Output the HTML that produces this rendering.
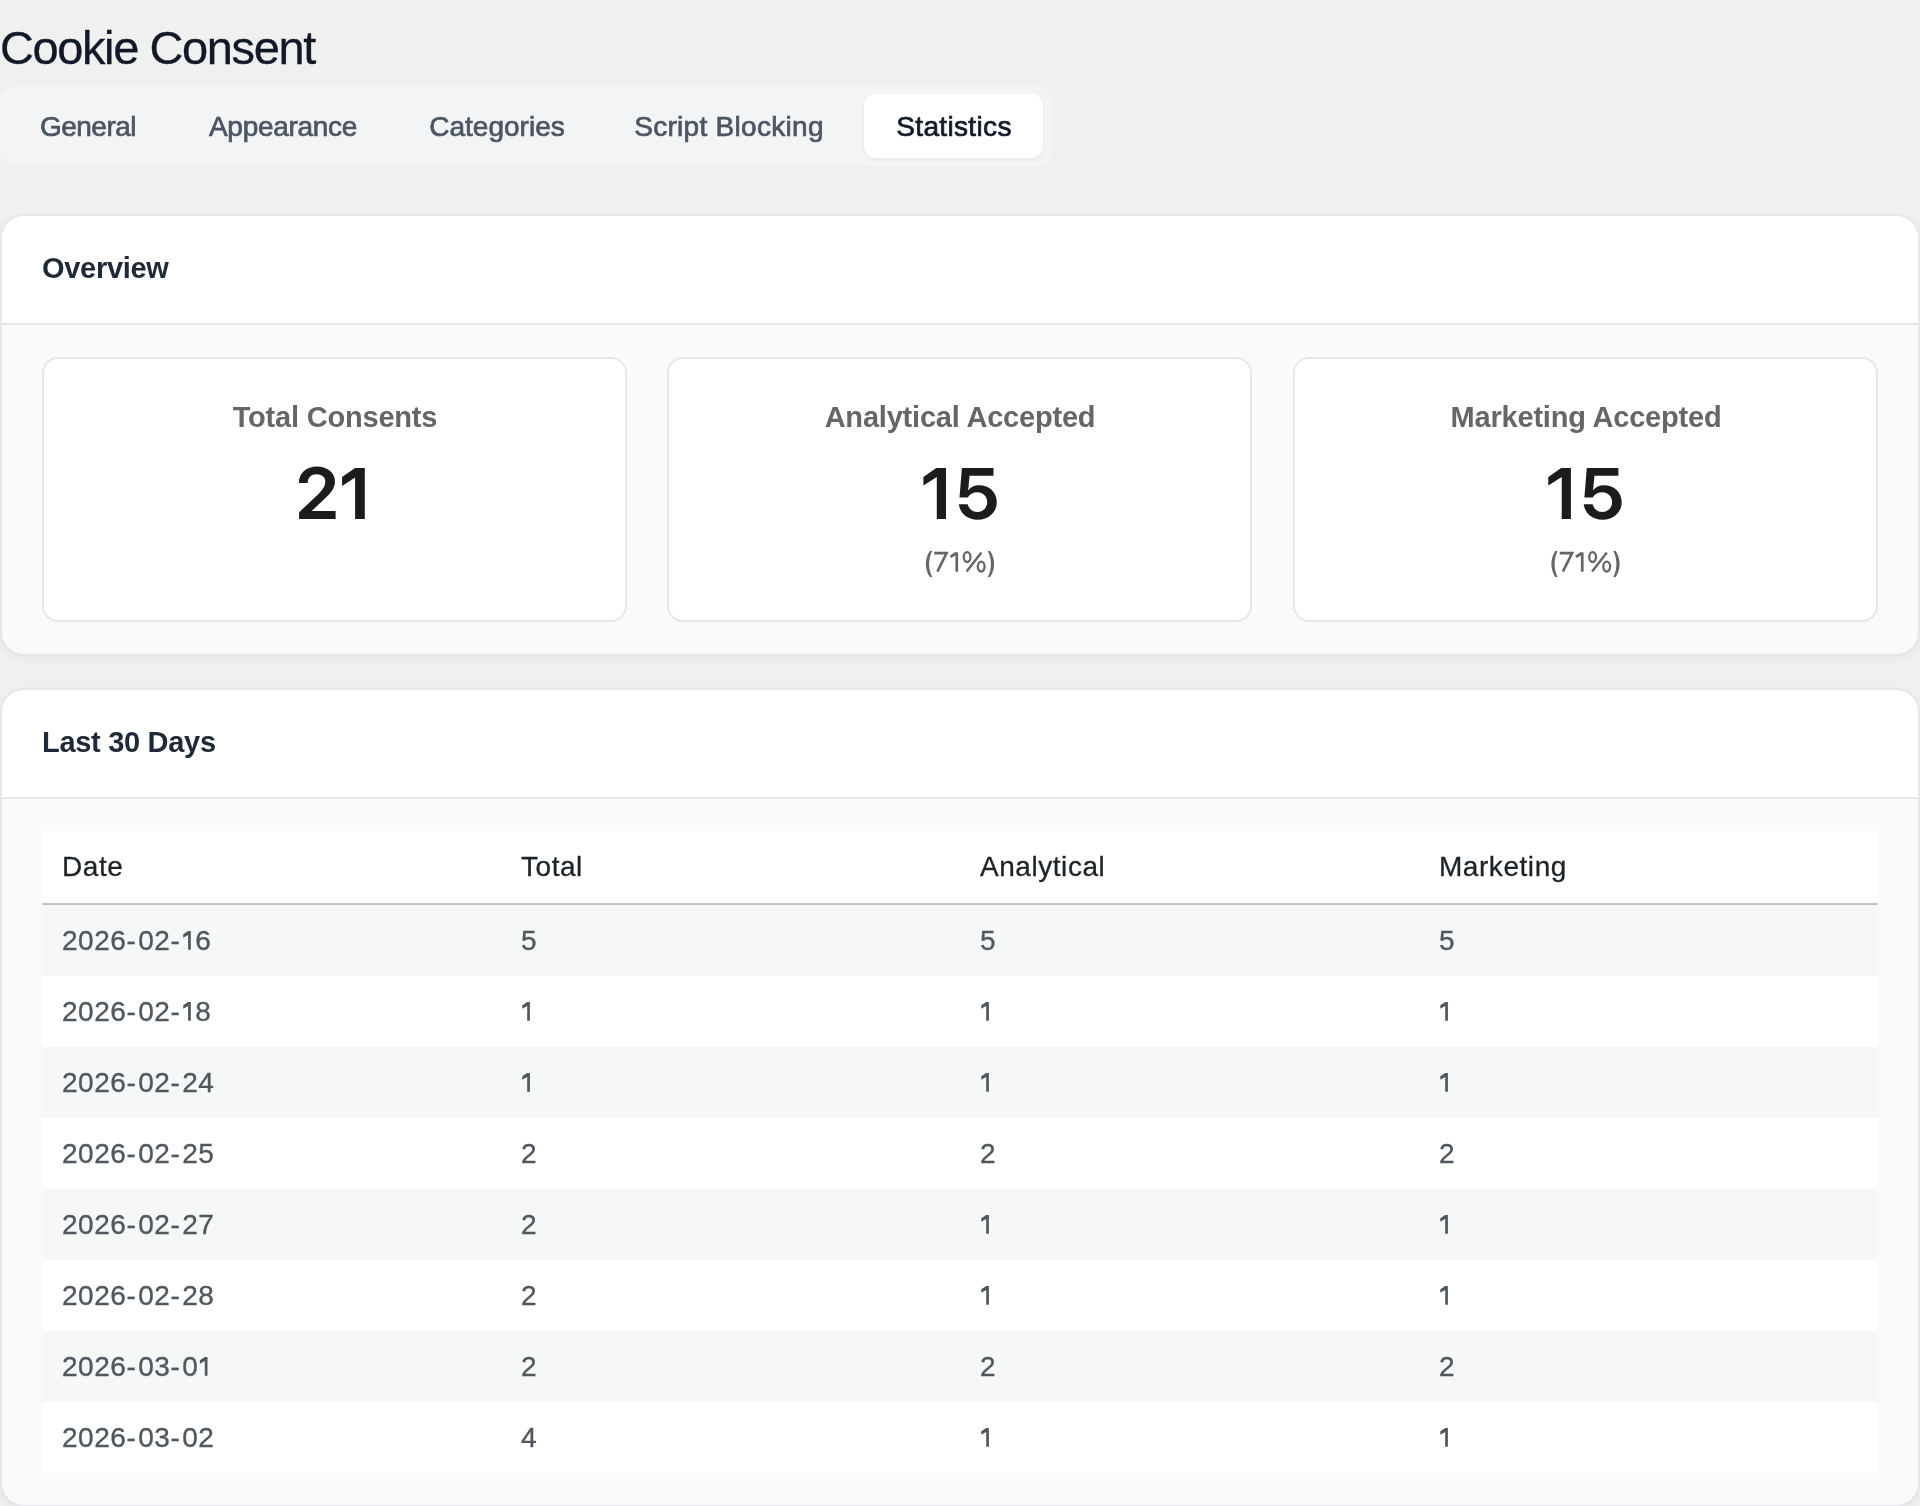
<!DOCTYPE html>
<html>
<head>
<meta charset="utf-8">
<title>Cookie Consent</title>
<style>
html,body{margin:0;padding:0;}
body{width:1920px;height:1506px;overflow:hidden;position:relative;background:#f0f0f1;font-family:"Liberation Sans",sans-serif;}
.a{position:absolute;white-space:nowrap;}
.t{line-height:1;}
.title{left:0;top:24px;font-size:47px;color:#111827;letter-spacing:-1.4px;-webkit-text-stroke:0.3px currentColor;}
.tabs{left:0;top:86px;width:1051px;height:80px;background:#f3f4f6;border-radius:16px;}
.tab-active{left:864px;top:94px;width:179px;height:64px;background:#fff;border-radius:12px;box-shadow:0 2px 4px rgba(0,0,0,0.06);}
.tab{width:400px;text-align:center;font-size:28px;color:#4b5563;top:113px;-webkit-text-stroke:0.7px currentColor;}
.tab.on{color:#111827;}
.card{left:0;width:1916px;border:2px solid #e5e7eb;border-radius:24px;background:#f9fafb;box-shadow:0 2px 6px rgba(0,0,0,0.05);overflow:hidden;}
.card .hd{position:absolute;left:0;top:0;width:100%;height:107px;background:#fff;border-bottom:2px solid #e5e7eb;}
.h2{font-size:29px;font-weight:700;color:#1f2937;left:42px;letter-spacing:-0.3px;}
.box{top:357px;width:581px;height:261px;border:2px solid #e5e7eb;border-radius:16px;background:#fff;}
.lbl{width:600px;text-align:center;font-size:29px;font-weight:700;color:#666;top:402.5px;letter-spacing:-0.2px;}
.num{width:600px;text-align:center;font-size:72px;font-weight:700;color:#1e1e1e;top:457px;}
.pct{width:600px;text-align:center;font-size:28px;color:#666;top:548px;}
.tbl{left:42px;top:831px;width:1836px;height:642px;background:#fff;}
.th{font-size:28px;color:#1d2327;top:853px;letter-spacing:0.55px;-webkit-text-stroke:0.3px currentColor;}
.rowbg{left:42px;width:1836px;height:71px;}
.hy{letter-spacing:2.4px}.h1{opacity:0;letter-spacing:-2.5px}
.td{font-size:28px;color:#50575e;letter-spacing:0.55px;-webkit-text-stroke:0.35px currentColor;}
</style>
</head>
<body>
<div id="wrap" style="position:absolute;left:0;top:0;width:1920px;height:1506px;will-change:transform;">
<div class="a t title">Cookie Consent</div>

<div class="a tabs"></div>
<div class="a tab-active"></div>
<div class="a t tab" style="left:-112px;letter-spacing:-0.5px">General</div>
<div class="a t tab" style="left:83px;letter-spacing:-0.3px">Appearance</div>
<div class="a t tab" style="left:297px">Categories</div>
<div class="a t tab" style="left:529px;letter-spacing:0.3px">Script Blocking</div>
<div class="a t tab on" style="left:754px;letter-spacing:0.35px">Statistics</div>

<!-- Card 1 -->
<div class="a card" style="top:214px;height:438px;">
  <div class="hd"></div>
</div>
<div class="a t h2" style="top:253.5px">Overview</div>

<div class="a box" style="left:42px"></div>
<div class="a box" style="left:667px"></div>
<div class="a box" style="left:1293px"></div>

<div class="a t lbl" style="left:35px">Total Consents</div>
<div class="a t num" style="left:35px;color:transparent">21</div>

<div class="a t lbl" style="left:660px">Analytical Accepted</div>
<div class="a t num" style="left:660px;color:transparent">15</div>
<div class="a t pct" style="left:660px;color:transparent">(71%)</div>

<div class="a t lbl" style="left:1286px">Marketing Accepted</div>
<div class="a t num" style="left:1286px;color:transparent">15</div>
<div class="a t pct" style="left:1286px;color:transparent">(71%)</div>

<svg class="a" style="left:0;top:0" width="1920" height="1506" viewBox="0 0 1920 1506">
<g fill="#1c1c1c">
<path d="M298.9 483C298.9 473 306.5 466.6 317 466.6C327.5 466.6 335 473 335 481.5C335 487 332 491.5 327 496.5L311.7 510.9L335.6 510.9L335.6 518.9L299.1 518.9L299.1 512.2L318.5 494C323 489.5 325.3 486 325.3 481.7C325.3 477 321.5 474.2 316.8 474.2C311.5 474.2 307.7 477.5 307.7 483Z"/>
<path d="M355.1 468L364.8 468L364.8 518.9L355.1 518.9L355.1 477.5L342.1 485.9L342.1 477Z"/>
<g id="fifteen">
<path d="M936.3 468L946 468L946 519L936.8 519L936.8 476.9L923.4 485.5L923.4 477.1Z"/>
<path d="M961.9 468L993.5 468L993.5 475.7L969.6 475.7L968.1 490.5C970.5 487 974.5 485.3 979 485.3C989.5 485.3 996.8 492.5 996.8 502.3C996.8 512.5 988.5 519.8 977.5 519.8C967.5 519.8 960 513.5 958.8 504.3L967.7 504.3C968.8 508.8 972.5 512 977.4 512C983 512 987.2 507.5 987.2 502.2C987.2 496.5 983 492.3 977.4 492.3C973.5 492.3 969.8 494.2 967.7 497.5L959.5 497.5Z"/>
</g>
<use href="#fifteen" transform="translate(624.9 0)"/>
</g>
</svg>

<svg class="a" style="left:0;top:0" width="1920" height="1506" viewBox="0 0 1920 1506">
<g id="pct" fill="none" stroke="#666" stroke-width="2.6">
<path fill="#666" stroke="none" d="M929.8 550.9L932.2 550.9C930.1 555 929.1 559 929.1 563.9C929.1 568.8 930.1 572.8 932.2 576.9L929.8 576.9C927.2 572.8 925.9 568.8 925.9 563.9C925.9 559 927.2 555 929.8 550.9Z"/>
<path d="M934.2 553.1L946.6 553.1L937.4 571.7" stroke-linejoin="miter"/>
<path d="M956.75 552.4L956.75 571.7" stroke-width="2.7"/>
<path d="M956.5 553L950.5 556.9" stroke-width="2.9"/>
<ellipse cx="967.1" cy="557.1" rx="3.4" ry="4.9" stroke-width="2.3"/>
<ellipse cx="981.2" cy="566.6" rx="3.4" ry="4.9" stroke-width="2.3"/>
<path d="M981.4 552.4L966.6 571.5" stroke-width="2.4"/>
<path fill="#666" stroke="none" d="M990.2 550.9L987.8 550.9C989.9 555 990.9 559 990.9 563.9C990.9 568.8 989.9 572.8 987.8 576.9L990.2 576.9C992.8 572.8 994.1 568.8 994.1 563.9C994.1 559 992.8 555 990.2 550.9Z"/>
</g>
<use href="#pct" transform="translate(625.5 0)"/>
</svg>
<!-- Card 2 -->
<div class="a card" style="top:688px;height:815px;">
  <div class="hd"></div>
</div>
<div class="a t h2" style="top:727.5px">Last 30 Days</div>

<div class="a tbl"></div>
<div class="a" style="left:42px;top:903px;width:1836px;height:2px;background:#c3c4c7"></div>
<div class="a t th" style="left:62px">Date</div>
<div class="a t th" style="left:521px">Total</div>
<div class="a t th" style="left:980px">Analytical</div>
<div class="a t th" style="left:1439px">Marketing</div>

<div class="a rowbg" style="top:905px;background:#f6f7f7"></div>
<div class="a rowbg" style="top:1047px;background:#f6f7f7"></div>
<div class="a rowbg" style="top:1189px;background:#f6f7f7"></div>
<div class="a rowbg" style="top:1331px;background:#f6f7f7"></div>

<div class="a t td" style="left:62px;top:927px">2026<span class="hy">-</span>02<span class="hy">-</span><span class="h1">1</span>6</div>
<div class="a t td" style="left:521px;top:927px">5</div>
<div class="a t td" style="left:980px;top:927px">5</div>
<div class="a t td" style="left:1439px;top:927px">5</div>

<div class="a t td" style="left:62px;top:998px">2026<span class="hy">-</span>02<span class="hy">-</span><span class="h1">1</span>8</div>
<div class="a t td" style="left:521px;top:998px;color:transparent;-webkit-text-stroke:0">1</div>
<div class="a t td" style="left:980px;top:998px;color:transparent;-webkit-text-stroke:0">1</div>
<div class="a t td" style="left:1439px;top:998px;color:transparent;-webkit-text-stroke:0">1</div>

<div class="a t td" style="left:62px;top:1069px">2026<span class="hy">-</span>02<span class="hy">-</span>24</div>
<div class="a t td" style="left:521px;top:1069px;color:transparent;-webkit-text-stroke:0">1</div>
<div class="a t td" style="left:980px;top:1069px;color:transparent;-webkit-text-stroke:0">1</div>
<div class="a t td" style="left:1439px;top:1069px;color:transparent;-webkit-text-stroke:0">1</div>

<div class="a t td" style="left:62px;top:1140px">2026<span class="hy">-</span>02<span class="hy">-</span>25</div>
<div class="a t td" style="left:521px;top:1140px">2</div>
<div class="a t td" style="left:980px;top:1140px">2</div>
<div class="a t td" style="left:1439px;top:1140px">2</div>

<div class="a t td" style="left:62px;top:1211px">2026<span class="hy">-</span>02<span class="hy">-</span>27</div>
<div class="a t td" style="left:980px;top:1211px;color:transparent;-webkit-text-stroke:0">1</div>
<div class="a t td" style="left:1439px;top:1211px;color:transparent;-webkit-text-stroke:0">1</div>
<div class="a t td" style="left:521px;top:1211px">2</div>

<div class="a t td" style="left:62px;top:1282px">2026<span class="hy">-</span>02<span class="hy">-</span>28</div>
<div class="a t td" style="left:980px;top:1282px;color:transparent;-webkit-text-stroke:0">1</div>
<div class="a t td" style="left:1439px;top:1282px;color:transparent;-webkit-text-stroke:0">1</div>
<div class="a t td" style="left:521px;top:1282px">2</div>

<div class="a t td" style="left:62px;top:1353px">2026<span class="hy">-</span>03<span class="hy">-</span>0<span class="h1">1</span></div>
<div class="a t td" style="left:521px;top:1353px">2</div>
<div class="a t td" style="left:980px;top:1353px">2</div>
<div class="a t td" style="left:1439px;top:1353px">2</div>

<div class="a t td" style="left:62px;top:1424px">2026<span class="hy">-</span>03<span class="hy">-</span>02</div>
<div class="a t td" style="left:980px;top:1424px;color:transparent;-webkit-text-stroke:0">1</div>
<div class="a t td" style="left:1439px;top:1424px;color:transparent;-webkit-text-stroke:0">1</div>
<div class="a t td" style="left:521px;top:1424px">4</div>
<svg class="a" style="left:0;top:0" width="1920" height="1506" viewBox="0 0 1920 1506"><g fill="#50575e">
<path id="one" d="M527.2 1002L529.9 1002L529.9 1020.8L527.2 1020.8L527.2 1005.9L522.3 1008.7L522.3 1005.3Z"/>
<use href="#one" transform="translate(-339.1 -71)"/>
<use href="#one" transform="translate(-339.1 0)"/>
<use href="#one" transform="translate(-322.4 355)"/>
<use href="#one" transform="translate(459 0)"/>
<use href="#one" transform="translate(918 0)"/>
<use href="#one" transform="translate(0 71)"/>
<use href="#one" transform="translate(459 71)"/>
<use href="#one" transform="translate(918 71)"/>
<use href="#one" transform="translate(459 213)"/>
<use href="#one" transform="translate(918 213)"/>
<use href="#one" transform="translate(459 284)"/>
<use href="#one" transform="translate(918 284)"/>
<use href="#one" transform="translate(459 426)"/>
<use href="#one" transform="translate(918 426)"/>
</g></svg>
</div>
</body>
</html>
